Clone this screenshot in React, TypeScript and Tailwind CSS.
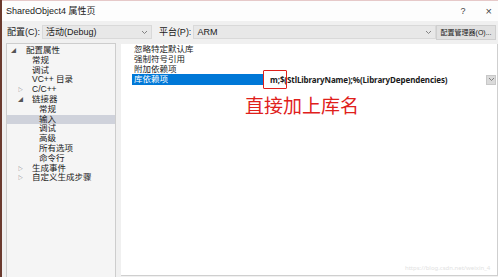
import React from "react";

const font = { fontFamily: '"Liberation Sans", "Noto Sans CJK SC", sans-serif' };

const Chevron = () => (
  <svg width="7" height="5" viewBox="0 0 7 5" className="shrink-0">
    <path d="M1 1l2.5 2.5L6 1" fill="none" stroke="#777" strokeWidth="0.9" />
  </svg>
);

const treeRows: { label: string; indent: number; arrow?: "open" | "closed"; selected?: boolean }[] = [
  { label: "配置属性", indent: 0, arrow: "open" },
  { label: "常规", indent: 1 },
  { label: "调试", indent: 1 },
  { label: "VC++ 目录", indent: 1 },
  { label: "C/C++", indent: 1, arrow: "closed" },
  { label: "链接器", indent: 1, arrow: "open" },
  { label: "常规", indent: 2 },
  { label: "输入", indent: 2, selected: true },
  { label: "调试", indent: 2 },
  { label: "高级", indent: 2 },
  { label: "所有选项", indent: 2 },
  { label: "命令行", indent: 2 },
  { label: "生成事件", indent: 1, arrow: "closed" },
  { label: "自定义生成步骤", indent: 1, arrow: "closed" },
];

const propRows = ["忽略特定默认库", "强制符号引用", "附加依赖项"];

export default function App() {
  return (
    <div
      className="relative w-[498px] h-[277px] overflow-hidden bg-[#f0f0f0] text-[#1a1a1a] border-l-2 border-l-[#6b3a2e] whitespace-nowrap"
      style={font}
    >
      {/* title bar */}
      <div className="h-[21px] bg-[#fdfdfd] border-t border-t-[#e6c9c9] flex items-center justify-between pl-[4px] pr-[6px]">
        <span className="text-[9px] leading-[10px]">SharedObject4 属性页</span>
        <div className="flex items-center gap-[20px] text-[#444]">
          <span className="text-[9px] leading-[10px]">?</span>
          <span className="text-[11px] leading-[11px]">×</span>
        </div>
      </div>

      {/* toolbar */}
      <div className="h-[22px] flex items-center pl-[5px] pr-[2px] text-[9px] leading-[10px]">
        <span className="mr-[2px]">配置(C):</span>
        <div className="w-[110px] h-[14px] border border-[#d9d9d9] bg-[#e8e8e8] flex items-center justify-between px-[3px]">
          <span>活动(Debug)</span>
          <Chevron />
        </div>
        <span className="ml-[7px] mr-[2px]">平台(P):</span>
        <div className="w-[243px] h-[14px] border border-[#d9d9d9] bg-[#e8e8e8] flex items-center justify-between px-[3px]">
          <span>ARM</span>
          <Chevron />
        </div>
        <div className="ml-auto w-[60px] h-[15px] border border-[#cfcfcf] bg-[#e1e1e1] flex items-center justify-center text-[7px] leading-[9px]">
          配置管理器(O)...
        </div>
      </div>

      {/* body */}
      <div className="flex h-[234px]">
        {/* tree */}
        <div className="ml-[4px] w-[110px] h-[240px] border border-[#cdcdcd] bg-[#f5f5f5] pt-[2px] text-[8.5px] leading-[9.8px]">
          {treeRows.map((r, i) => (
            <div
              key={i}
              className={`h-[9.8px] flex items-center ${r.selected ? "bg-[#cfd2db]" : ""}`}
              style={{ paddingLeft: 4 + r.indent * 7 }}
            >
              <span className="w-[7px] text-[5px] leading-[9.8px] text-[#555] shrink-0">
                {r.arrow === "open" ? "◢" : r.arrow === "closed" ? "▷" : ""}
              </span>
              <span className={r.indent === 0 ? "ml-[8px]" : "ml-[7px]"}>{r.label}</span>
            </div>
          ))}
        </div>

        {/* property grid */}
        <div className="ml-[5px] mt-[1px] flex-1 h-[232px] bg-white border-r border-b border-[#cfcfcf] pl-[11px] pt-[1px] text-[8.5px] leading-[9.8px]">
          {propRows.map((p) => (
            <div key={p} className="h-[9.8px] flex items-center pl-[2px]">
              {p}
            </div>
          ))}
          <div className="h-[11px] flex items-center">
            <div className="w-[132px] h-full bg-[#0078d7] text-white flex items-center pl-[2px]">库依赖项</div>
            <div className="flex-1 h-full flex items-center justify-between pl-[6px] pr-[1px]">
              <span className="font-bold text-[8px] leading-[10px] tracking-[-0.1px]" style={{ fontFamily: '"Noto Sans", sans-serif' }}>
                m;$(StlLibraryName);%(LibraryDependencies)
              </span>
              <div className="w-[10px] h-[10px] bg-[#dadada] border border-[#c8c8c8] flex items-center justify-center">
                <Chevron />
              </div>
            </div>
          </div>
        </div>
      </div>

      {/* annotations over the screenshot */}
      <div className="absolute left-[261px] top-[70px] w-[24px] h-[19px] border-[1.5px] border-[#e0201b] rounded-[1px]" />
      <div className="absolute left-[243px] top-[97px] text-[19px] leading-[20px] text-[#e0201b]">直接加上库名</div>
      <div className="absolute left-[403px] top-[265px] text-[6px] leading-[7px] text-[#e2e2e2]" style={{ fontFamily: '"Noto Sans", sans-serif' }}>
        https://blog.csdn.net/weixin_4
      </div>
    </div>
  );
}
